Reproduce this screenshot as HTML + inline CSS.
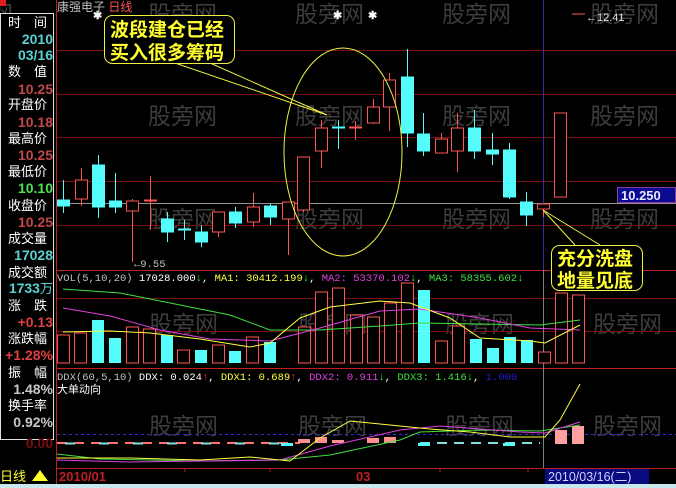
<!DOCTYPE html>
<html><head><meta charset="utf-8"><style>
html,body{margin:0;padding:0;background:#000;width:676px;height:488px;overflow:hidden}
svg{display:block}
text{font-family:"Liberation Sans","Noto Sans CJK SC",sans-serif}
.wm{font-size:23px;fill:#3c3c3c;font-family:"Noto Sans CJK SC",sans-serif}
.lb{font-size:13px;fill:#fff;font-family:"Noto Sans CJK SC",sans-serif}
.nv{font-size:14px;font-weight:bold;font-family:"Liberation Sans",sans-serif;text-anchor:end}
.mono{font-family:"Liberation Mono","Noto Sans CJK SC",monospace;font-size:10.5px}
</style></head><body>
<svg width="676" height="488" viewBox="0 0 676 488" xmlns="http://www.w3.org/2000/svg">
<rect width="676" height="488" fill="#000"/>
<!-- watermarks -->
<g class="wm">
<text x="-10" y="22">网</text><text x="148" y="22">股旁网</text><text x="295" y="22">股旁网</text><text x="442" y="22">股旁网</text><text x="590" y="22">股旁网</text>
<text x="-10" y="124">网</text><text x="148" y="124">股旁网</text><text x="295" y="124">股旁网</text><text x="442" y="124">股旁网</text><text x="590" y="124">股旁网</text>
<text x="-10" y="227">网</text><text x="148" y="227">股旁网</text><text x="295" y="227">股旁网</text><text x="442" y="227">股旁网</text><text x="590" y="227">股旁网</text>
<text x="-10" y="332">网</text><text x="149" y="332">股旁网</text><text x="298" y="332">股旁网</text><text x="445" y="332">股旁网</text><text x="593" y="332">股旁网</text>
<text x="-10" y="434">网</text><text x="149" y="434">股旁网</text><text x="298" y="434">股旁网</text><text x="445" y="434">股旁网</text><text x="593" y="434">股旁网</text>
</g>
<!-- grid -->
<g stroke="#7a1010" stroke-width="1">
<line x1="57" y1="50.5" x2="676" y2="50.5"/><line x1="57" y1="94.5" x2="676" y2="94.5"/><line x1="57" y1="137.5" x2="676" y2="137.5"/><line x1="57" y1="181.5" x2="676" y2="181.5"/><line x1="57" y1="225.5" x2="676" y2="225.5"/>
<line x1="57" y1="298.5" x2="676" y2="298.5"/><line x1="57" y1="331.5" x2="676" y2="331.5"/>
</g>
<g stroke="#c02020" stroke-width="1">
<line x1="57" y1="270.5" x2="676" y2="270.5"/><line x1="57" y1="368.5" x2="676" y2="368.5"/><line x1="57" y1="468.5" x2="676" y2="468.5"/>
<line x1="56.5" y1="0" x2="56.5" y2="484"/>
</g>
<line x1="57" y1="203.5" x2="676" y2="203.5" stroke="#909090"/>
<line x1="57" y1="434.5" x2="676" y2="434.5" stroke="#3030d0" stroke-dasharray="3,3"/>
<line x1="543.5" y1="0" x2="543.5" y2="270" stroke="#3030a0"/>
<line x1="543.5" y1="270" x2="543.5" y2="468" stroke="#808080"/>
<!-- candles -->
<g stroke-width="1">
<g stroke="#54fcfc" fill="#54fcfc">
<line x1="63.5" y1="180" x2="63.5" y2="213"/><rect x="57.5" y="200" width="12" height="6"/>
<line x1="98.5" y1="155" x2="98.5" y2="218"/><rect x="92.5" y="165" width="12" height="42"/>
<line x1="115.5" y1="173" x2="115.5" y2="213"/><rect x="109.5" y="201" width="12" height="6"/>
<line x1="167.5" y1="212" x2="167.5" y2="242"/><rect x="161.5" y="219" width="12" height="13"/>
<line x1="184.5" y1="220" x2="184.5" y2="240"/><rect x="178.5" y="229" width="12" height="1"/>
<line x1="201.5" y1="225" x2="201.5" y2="247"/><rect x="195.5" y="232" width="12" height="10"/>
<line x1="235.5" y1="207" x2="235.5" y2="228"/><rect x="229.5" y="212" width="12" height="11"/>
<line x1="270.5" y1="204" x2="270.5" y2="225"/><rect x="264.5" y="206" width="12" height="11"/>
<line x1="338.5" y1="120" x2="338.5" y2="149"/><rect x="332.5" y="127" width="12" height="1"/>
<line x1="407.5" y1="49" x2="407.5" y2="147"/><rect x="401.5" y="77" width="12" height="56"/>
<line x1="423.5" y1="113" x2="423.5" y2="156"/><rect x="417.5" y="134" width="12" height="17"/>
<line x1="474.5" y1="110" x2="474.5" y2="159"/><rect x="468.5" y="128" width="12" height="23"/>
<line x1="492.5" y1="133" x2="492.5" y2="165"/><rect x="486.5" y="150" width="12" height="4"/>
<line x1="509.5" y1="143" x2="509.5" y2="199"/><rect x="503.5" y="150" width="12" height="47"/>
<line x1="526.5" y1="192" x2="526.5" y2="226"/><rect x="520.5" y="202" width="12" height="13"/>
</g>
<g stroke="#ff5454" fill="#000">
<line x1="81.5" y1="168" x2="81.5" y2="206"/><rect x="75.5" y="180" width="12" height="19"/>
<line x1="132.5" y1="199" x2="132.5" y2="262"/><rect x="126.5" y="201" width="12" height="10"/>
<line x1="150.5" y1="176" x2="150.5" y2="230"/><rect x="144.5" y="200" width="12" height="1" fill="#ff5454"/>
<line x1="218.5" y1="212" x2="218.5" y2="237"/><rect x="212.5" y="212" width="12" height="20"/>
<line x1="253.5" y1="193" x2="253.5" y2="227"/><rect x="247.5" y="207" width="12" height="15"/>
<line x1="288.5" y1="202" x2="288.5" y2="255"/><rect x="282.5" y="202" width="12" height="17"/>
<line x1="303.5" y1="157" x2="303.5" y2="212"/><rect x="297.5" y="157" width="12" height="53"/>
<line x1="321.5" y1="120" x2="321.5" y2="168"/><rect x="315.5" y="128" width="12" height="23"/>
<line x1="355.5" y1="121" x2="355.5" y2="140"/><rect x="349.5" y="127" width="12" height="1" fill="#ff5454"/>
<line x1="373.5" y1="99" x2="373.5" y2="124"/><rect x="367.5" y="107" width="12" height="16"/>
<line x1="389.5" y1="73" x2="389.5" y2="131"/><rect x="383.5" y="80" width="12" height="27"/>
<line x1="441.5" y1="133" x2="441.5" y2="153"/><rect x="435.5" y="139" width="12" height="14"/>
<line x1="457.5" y1="113" x2="457.5" y2="172"/><rect x="451.5" y="128" width="12" height="23"/>
<line x1="543.5" y1="204" x2="543.5" y2="217"/><rect x="537.5" y="204" width="12" height="5"/>
<rect x="554.5" y="113" width="12" height="84"/>
</g>
</g>
<!-- 9.55 marker -->
<text x="134" y="267" font-size="10" fill="#c0c0c0" class="mono">←9.55</text>
<!-- 12.41 -->
<line x1="572" y1="14" x2="585" y2="14" stroke="#ff5454"/>
<text x="586" y="21" font-size="11" fill="#e0e0e0" font-family="Liberation Serif,serif">←12.41</text>
<!-- asterisks -->
<g fill="#fff" font-size="11" font-weight="bold"><text x="93" y="19">✱</text><text x="333" y="19">✱</text><text x="368" y="19">✱</text></g>
<!-- 10.250 box -->
<rect x="617.5" y="187.5" width="58" height="15" fill="#0a0a90" stroke="#8a3aa0"/>
<text x="621" y="200" font-size="13" font-weight="bold" fill="#e8e8ff">10.250</text>
<!-- ellipse & annotations -->
<ellipse cx="343" cy="152" rx="59" ry="104" fill="none" stroke="#f0f040"/>
<g stroke="#f0f040" fill="none">
<line x1="175" y1="63" x2="327" y2="115"/><line x1="210" y1="63" x2="327" y2="115"/>
<rect x="104.5" y="15.5" width="130" height="48" rx="8" fill="#000"/>
<line x1="543" y1="210" x2="575" y2="245"/><line x1="543" y1="210" x2="600" y2="245"/>
<rect x="551.5" y="245.5" width="91" height="45" rx="8" fill="#000"/>
</g>
<g fill="#ffff30" font-size="19" font-weight="bold" font-family="Noto Sans CJK SC,sans-serif">
<text x="110" y="36">波段建仓已经</text><text x="110" y="59">买入很多筹码</text>
<text x="557" y="265">充分洗盘</text><text x="557" y="287">地量见底</text>
</g>
<!-- title -->
<rect x="0" y="0" width="6" height="6" fill="#e02020"/>
<text x="57" y="11" font-size="12" fill="#c0c0c0" font-family="Noto Sans CJK SC,sans-serif">康强电子 <tspan fill="#ff5454">日线</tspan></text>
<!-- vol header -->
<text x="57" y="281" class="mono" fill="#c0c0c0">VOL(5,10,20) <tspan fill="#fff">17028.000</tspan><tspan fill="#30ff30">↓</tspan><tspan fill="#fff">,</tspan><tspan fill="#ffff40"> MA1: 30412.199</tspan><tspan fill="#30ff30">↓</tspan><tspan fill="#fff">,</tspan><tspan fill="#e040e0"> MA2: 53370.102</tspan><tspan fill="#30ff30">↓</tspan><tspan fill="#fff">,</tspan><tspan fill="#40e040"> MA3: 58355.602</tspan><tspan fill="#30ff30">↓</tspan></text>
<!-- volume bars -->
<g fill="#000" stroke="#ff5454">
<rect x="57.5" y="335" width="12" height="28"/><rect x="74.5" y="333" width="12" height="30"/>
<rect x="126.5" y="327" width="12" height="36"/><rect x="143.5" y="329" width="12" height="34"/>
<rect x="177.5" y="350" width="12" height="13"/><rect x="212.5" y="345" width="12" height="18"/>
<rect x="246.5" y="337" width="12" height="26"/><rect x="298.5" y="327" width="12" height="36"/>
<rect x="315.5" y="292" width="12" height="71"/><rect x="332.5" y="288" width="12" height="75"/>
<rect x="350.5" y="315" width="12" height="48"/><rect x="367.5" y="317" width="12" height="46"/>
<rect x="384.5" y="303" width="12" height="60"/><rect x="401.5" y="283" width="12" height="80"/>
<rect x="435.5" y="341" width="12" height="22"/><rect x="452.5" y="326" width="12" height="37"/>
<rect x="538.5" y="352" width="12" height="11"/><rect x="555.5" y="293" width="12" height="70"/>
<rect x="572.5" y="295" width="12" height="68"/>
</g>
<g fill="#54fcfc">
<rect x="92" y="320" width="12" height="43"/><rect x="109" y="338" width="12" height="25"/>
<rect x="161" y="335" width="12" height="28"/><rect x="195" y="350" width="12" height="13"/>
<rect x="229" y="351" width="12" height="12"/><rect x="264" y="342" width="12" height="21"/>
<rect x="418" y="290" width="12" height="73"/><rect x="470" y="339" width="12" height="24"/>
<rect x="487" y="348" width="12" height="15"/><rect x="504" y="337" width="12" height="26"/>
<rect x="521" y="340" width="12" height="23"/>
</g>
<g fill="none" stroke-width="1">
<polyline stroke="#40e040" points="63,289 120,293 180,305 230,315 270,330 320,330 380,326 420,323 480,324 540,325 580,320"/>
<polyline stroke="#e040e0" points="63,308 110,316 160,330 210,339 270,341 320,328 380,311 420,309 480,318 530,328 580,330"/>
<polyline stroke="#ffff40" points="63,332 110,331 150,333 200,339 250,347 270,343 300,318 330,307 380,301 410,303 450,318 480,338 530,341 545,343 580,325"/>
</g>
<!-- DDX header -->
<text x="57" y="380" class="mono" fill="#c0c0c0">DDX(60,5,10) <tspan fill="#fff">DDX: 0.024</tspan><tspan fill="#ff3030">↑</tspan><tspan fill="#fff">,</tspan><tspan fill="#ffff40"> DDX1: 0.689</tspan><tspan fill="#ff3030">↑</tspan><tspan fill="#fff">,</tspan><tspan fill="#e040e0"> DDX2: 0.911</tspan><tspan fill="#30ff30">↓</tspan><tspan fill="#fff">,</tspan><tspan fill="#40e040"> DDX3: 1.416</tspan><tspan fill="#30ff30">↓</tspan><tspan fill="#fff">,</tspan><tspan fill="#2020d0"> 1.000</tspan></text>
<text x="57" y="393" font-size="11" fill="#fff" font-family="Noto Sans CJK SC,sans-serif">大单动向</text>
<!-- ddx bars -->
<g stroke-width="2">
<line x1="57" y1="443" x2="300" y2="443" stroke="#ff7070" stroke-dasharray="10,7"/>
<line x1="65" y1="443.5" x2="300" y2="443.5" stroke="#80e0e0" stroke-dasharray="10,24"/>
<line x1="420" y1="443" x2="540" y2="443" stroke="#80e0e0" stroke-dasharray="10,7"/>
</g>
<g fill="#ff9090">
<rect x="298" y="439" width="12" height="4"/><rect x="315" y="437" width="12" height="6"/><rect x="332" y="440" width="12" height="3"/>
<rect x="367" y="438" width="12" height="5"/><rect x="384" y="437" width="12" height="6"/>
<rect x="555" y="430" width="12" height="14" fill="#ffa0a0"/><rect x="572" y="426" width="12" height="18" fill="#ffa0a0"/>
</g>
<g fill="#54fcfc"><rect x="281" y="443" width="12" height="3"/><rect x="418" y="443" width="12" height="3"/><rect x="503" y="443" width="12" height="3"/></g>
<g fill="none">
<polyline stroke="#40e040" points="57,454 100,459 200,461 280,460 330,455 400,440 420,432 480,430 540,431 580,425"/>
<polyline stroke="#e040e0" points="57,460 130,462 200,461 280,460 330,446 400,430 440,426 520,432 545,433 580,422"/>
<polyline stroke="#ffff40" points="57,458 130,458 200,460 250,457 290,461 320,438 350,421 380,424 430,429 470,432 510,437 545,437 560,420 580,384"/>
</g>
<!-- date bar -->
<text x="59" y="481" font-size="13" font-weight="bold" fill="#c02020">2010/01</text>
<text x="356" y="481" font-size="13" font-weight="bold" fill="#c02020">03</text>
<g stroke="#c02020"><line x1="185" y1="468" x2="185" y2="472"/><line x1="270" y1="468" x2="270" y2="472"/><line x1="440" y1="468" x2="440" y2="472"/><line x1="528" y1="468" x2="528" y2="472"/></g>
<rect x="545" y="469" width="104" height="15" fill="#0a0a80"/>
<text x="548" y="481" font-size="12.5" fill="#d0d0ff" font-family="Liberation Sans,Noto Sans CJK SC,sans-serif">2010/03/16(二)</text>
<rect x="0" y="484" width="676" height="4" fill="#c8e8f0"/>
<!-- left panel -->
<rect x="0.5" y="13.5" width="53" height="426" fill="#000" stroke="#e0e0e0"/>
<g class="lb">
<text x="8" y="27">时　间</text><text x="8" y="76">数　值</text><text x="8" y="109">开盘价</text><text x="8" y="143">最高价</text><text x="8" y="176">最低价</text><text x="8" y="210">收盘价</text><text x="8" y="243">成交量</text><text x="8" y="277">成交额</text><text x="8" y="310">涨　跌</text><text x="8" y="343">涨跌幅</text><text x="8" y="377">振　幅</text><text x="8" y="410">换手率</text>
</g>
<g class="nv">
<text x="53" y="44" fill="#5ad0d0">2010</text><text x="53" y="60" fill="#5ad0d0">03/16</text>
<text x="53" y="94" fill="#c04848">10.25</text><text x="53" y="127" fill="#c04848">10.18</text><text x="53" y="160" fill="#c04848">10.25</text><text x="53" y="193" fill="#50e050">10.10</text><text x="53" y="227" fill="#c04848">10.25</text>
<text x="53" y="260" fill="#5ad0d0">17028</text><text x="53" y="293" fill="#5ad0d0">1733<tspan font-size="13" font-weight="normal" font-family="Noto Sans CJK SC,sans-serif">万</tspan></text>
<text x="53" y="327" fill="#e04040">+0.13</text><text x="53" y="360" fill="#e04040">+1.28%</text><text x="53" y="394" fill="#c8c8c8">1.48%</text><text x="53" y="427" fill="#c8c8c8">0.92%</text>
</g>
<text x="53" y="448" class="nv" fill="#7a1010">0.00</text>
<text x="0" y="481" font-size="13" fill="#ffff30" font-family="Noto Sans CJK SC,sans-serif">日线</text>
<polygon points="32,481 40,470 48,481" fill="#ffff30"/>
</svg>
</body></html>
